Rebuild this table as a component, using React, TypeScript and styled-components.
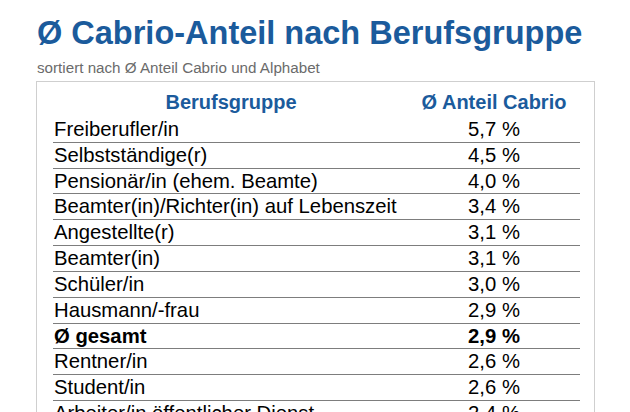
import React from "react";
import styled, { createGlobalStyle } from "styled-components";

const GlobalStyle = createGlobalStyle`
  html, body {
    margin: 0;
    padding: 0;
    background: #ffffff;
    overflow: hidden;
  }
  body {
    font-family: "Liberation Sans", Arial, sans-serif;
  }
`;

const Page = styled.div`
  padding: 15px 0 0 36px;
  width: 559px;
`;

const Title = styled.h1`
  margin: 0 0 0 1px;
  font-size: 32.5px;
  line-height: 37px;
  font-weight: 700;
  color: #1b5b9c;
  white-space: nowrap;
`;

const Subtitle = styled.div`
  margin: 7px 0 5px 1px;
  font-size: 15.2px;
  line-height: 17px;
  color: #6b6b6b;
`;

const Box = styled.div`
  border: 1px solid #cfcfcf;
  border-bottom: none;
  padding: 0 14px 0 16px;
`;

const HeadRow = styled.div`
  display: grid;
  grid-template-columns: 356px 170px;
  height: 34.85px;
  padding-top: 8.6px;
  box-sizing: border-box;
  font-size: 20px;
  line-height: 23px;
  font-weight: 700;
  color: #1b5b9c;
  white-space: nowrap;
`;

const Row = styled.div<{ $bold?: boolean }>`
  display: grid;
  grid-template-columns: 356px 170px;
  height: 24.85px;
  border-bottom: 1px solid #7d7d7d;
  font-size: 20.3px;
  line-height: 24.85px;
  font-weight: ${(p) => (p.$bold ? 700 : 400)};
  color: #000000;
  white-space: nowrap;
`;

const Label = styled.div<{ $center?: boolean }>`
  padding-left: ${(p) => (p.$center ? "0" : "1px")};
  text-align: ${(p) => (p.$center ? "center" : "left")};
`;

const Value = styled.div`
  text-align: center;
`;

const rows: { name: string; value: string; bold?: boolean }[] = [
  { name: "Freiberufler/in", value: "5,7 %" },
  { name: "Selbstständige(r)", value: "4,5 %" },
  { name: "Pensionär/in (ehem. Beamte)", value: "4,0 %" },
  { name: "Beamter(in)/Richter(in) auf Lebenszeit", value: "3,4 %" },
  { name: "Angestellte(r)", value: "3,1 %" },
  { name: "Beamter(in)", value: "3,1 %" },
  { name: "Schüler/in", value: "3,0 %" },
  { name: "Hausmann/-frau", value: "2,9 %" },
  { name: "Ø gesamt", value: "2,9 %", bold: true },
  { name: "Rentner/in", value: "2,6 %" },
  { name: "Student/in", value: "2,6 %" },
  { name: "Arbeiter/in öffentlicher Dienst", value: "2,4 %" },
];

export default function App() {
  return (
    <>
      <GlobalStyle />
      <Page>
        <Title>Ø Cabrio-Anteil nach Berufsgruppe</Title>
        <Subtitle>sortiert nach Ø Anteil Cabrio und Alphabet</Subtitle>
        <Box>
          <HeadRow>
            <Label $center>Berufsgruppe</Label>
            <Value>Ø Anteil Cabrio</Value>
          </HeadRow>
          {rows.map((r) => (
            <Row key={r.name} $bold={r.bold}>
              <Label>{r.name}</Label>
              <Value>{r.value}</Value>
            </Row>
          ))}
        </Box>
      </Page>
    </>
  );
}
